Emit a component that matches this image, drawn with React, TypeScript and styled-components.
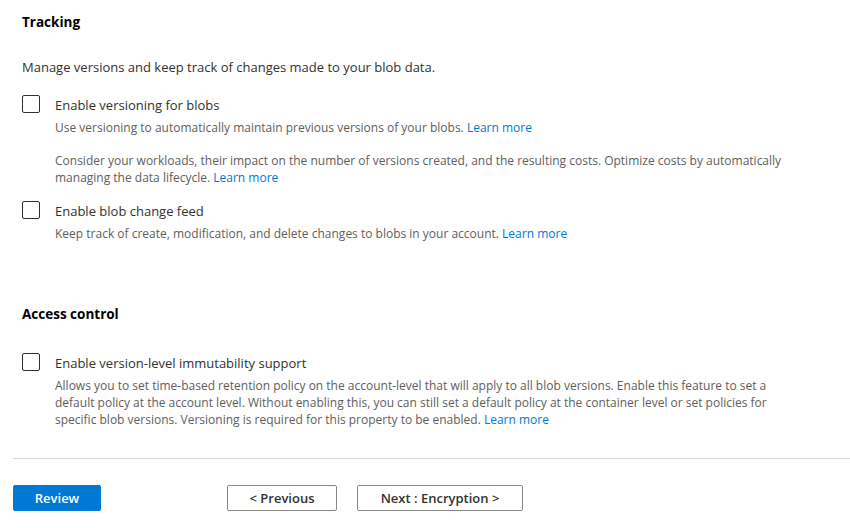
import React from 'react';
import styled, { createGlobalStyle } from 'styled-components';

const GlobalStyle = createGlobalStyle`
  html, body {
    margin: 0;
    padding: 0;
    background: #ffffff;
  }
  body {
    font-family: 'Open Sans', 'Noto Sans', 'Liberation Sans', sans-serif;
    color: #323130;
    -webkit-font-smoothing: antialiased;
  }
`;

const Page = styled.div`
  width: 850px;
  height: 528px;
  overflow: hidden;
  display: flex;
  flex-direction: column;
`;

const Content = styled.div`
  padding: 13px 0 0 22px;
`;

const SectionTitle = styled.h2<{ $gap?: number }>`
  margin: ${({ $gap }) => $gap ?? 0}px 0 0;
  font-size: 13.5px;
  line-height: 18px;
  font-weight: 700;
  color: #000000;
`;

const Intro = styled.p`
  margin: 27px 0 0;
  font-size: 13px;
  line-height: 18px;
  color: #323130;
`;

const Option = styled.div<{ $gap: number }>`
  margin-top: ${({ $gap }) => $gap}px;
  display: grid;
  grid-template-columns: 18px 1fr;
  column-gap: 15px;
`;

const Box = styled.span`
  width: 18px;
  height: 18px;
  box-sizing: border-box;
  border: 1px solid #323130;
  border-radius: 2px;
  background: #ffffff;
`;

const OptionBody = styled.div`
  display: flex;
  flex-direction: column;
`;

const Label = styled.span`
  font-size: 13px;
  line-height: 20px;
  color: #323130;
`;

const Desc = styled.p<{ $gap?: number }>`
  margin: ${({ $gap }) => $gap ?? 4}px 0 0;
  font-size: 12px;
  line-height: 17px;
  color: #605e5c;
`;

const Link = styled.a`
  color: #0078d4;
  text-decoration: none;
`;

const Divider = styled.hr`
  margin: 30px 0 0 13px;
  border: none;
  border-top: 1px solid #d6d6d6;
  height: 0;
`;

const Footer = styled.div`
  margin-top: 26px;
  padding-left: 13px;
  display: flex;
  align-items: center;
`;

const NavGroup = styled.div`
  margin-left: 126px;
  display: flex;
  gap: 20px;
`;

const Button = styled.button<{ $primary?: boolean; $width: number }>`
  width: ${({ $width }) => $width}px;
  height: 26px;
  box-sizing: border-box;
  border-radius: 2px;
  font-family: inherit;
  font-size: 13px;
  font-weight: 600;
  padding: 0;
  cursor: pointer;
  border: 1px solid ${({ $primary }) => ($primary ? '#0078d4' : '#8a8886')};
  background: ${({ $primary }) => ($primary ? '#0078d4' : '#ffffff')};
  color: ${({ $primary }) => ($primary ? '#ffffff' : '#323130')};
`;

interface CheckOptionProps {
  label: string;
  gap: number;
  children: React.ReactNode;
}

const CheckOption: React.FC<CheckOptionProps> = ({ label, gap, children }) => (
  <Option $gap={gap}>
    <Box />
    <OptionBody>
      <Label>{label}</Label>
      {children}
    </OptionBody>
  </Option>
);

const App: React.FC = () => {
  return (
    <Page>
      <GlobalStyle />
      <Content>
        <SectionTitle>Tracking</SectionTitle>
        <Intro>Manage versions and keep track of changes made to your blob data.</Intro>

        <CheckOption label="Enable versioning for blobs" gap={19}>
          <Desc>
            Use versioning to automatically maintain previous versions of your blobs. <Link href="#">Learn more</Link>
          </Desc>
          <Desc $gap={16}>
            Consider your workloads, their impact on the number of versions created, and the resulting costs. Optimize costs by automatically
            <br />
            managing the data lifecycle. <Link href="#">Learn more</Link>
          </Desc>
        </CheckOption>

        <CheckOption label="Enable blob change feed" gap={15}>
          <Desc>
            Keep track of create, modification, and delete changes to blobs in your account. <Link href="#">Learn more</Link>
          </Desc>
        </CheckOption>

        <SectionTitle $gap={63}>Access control</SectionTitle>

        <CheckOption label="Enable version-level immutability support" gap={30}>
          <Desc>
            Allows you to set time-based retention policy on the account-level that will apply to all blob versions. Enable this feature to set a
            <br />
            default policy at the account level. Without enabling this, you can still set a default policy at the container level or set policies for
            <br />
            specific blob versions. Versioning is required for this property to be enabled. <Link href="#">Learn more</Link>
          </Desc>
        </CheckOption>
      </Content>

      <Divider />

      <Footer>
        <Button $primary $width={88}>Review</Button>
        <NavGroup>
          <Button $width={110}>&lt; Previous</Button>
          <Button $width={166}>Next : Encryption &gt;</Button>
        </NavGroup>
      </Footer>
    </Page>
  );
};

export default App;
